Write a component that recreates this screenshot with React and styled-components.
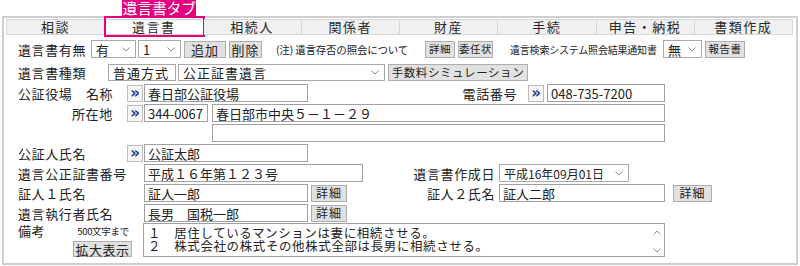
import React from 'react'
import styled, { createGlobalStyle } from 'styled-components'

const GlobalStyle = createGlobalStyle`
  html, body {
    margin: 0;
    padding: 0;
    background: #fff;
  }
  body {
    font-family: "Noto Sans CJK JP", "Noto Sans", sans-serif;
    color: #222;
  }
`

const Page = styled.div`
  width: 800px;
  height: 266px;
  padding: 16px 0 0 2px;
  box-sizing: border-box;
  overflow: hidden;
`

const Frame = styled.div`
  width: 796px;
  height: 249px;
  box-sizing: border-box;
  border: 2px solid #cfcfcf;
  padding-top: 1px;
`

const TabBar = styled.div`
  display: flex;
  height: 16px;
  margin: 0 3px 0 2px;
`

const Tab = styled.div`
  position: relative;
  flex: 1;
  box-sizing: border-box;
  border: 1px solid #d6d6d6;
  border-left: ${p => (p.$first ? '1px solid #d6d6d6' : 'none')};
  background: ${p => (p.$active ? '#fff' : '#f0f0f0')};
  font-size: 13px;
  line-height: 14px;
  letter-spacing: 1.5px;
  text-align: center;
  color: #2a2a2a;
`

const TabMark = styled.div`
  position: absolute;
  left: -1px;
  top: -4px;
  right: -2px;
  bottom: -3px;
  border: 2.5px solid #e4007f;
  pointer-events: none;
`

const TabCaption = styled.div`
  position: absolute;
  left: 17px;
  top: -20px;
  width: 74px;
  height: 16px;
  background: #e4007f;
  color: #fff;
  font-size: 15px;
  line-height: 15px;
  letter-spacing: -0.3px;
  text-align: center;
  white-space: nowrap;
`

const Form = styled.div`
  padding-left: 14px;
`

const Row = styled.div`
  display: flex;
  align-items: center;
  height: ${p => p.$h || 20}px;
  margin-top: ${p => p.$mt || 0}px;
`

const Label = styled.span`
  flex: none;
  box-sizing: border-box;
  width: ${p => p.$w}px;
  padding-left: ${p => p.$indent || 0}px;
  padding-right: ${p => p.$pr || 0}px;
  font-size: 13px;
  letter-spacing: 0.6px;
  white-space: nowrap;
  text-align: ${p => (p.$right ? 'right' : 'left')};
`

const Note = styled.span`
  flex: none;
  width: ${p => p.$w}px;
  margin-left: ${p => p.$ml || 0}px;
  font-size: ${p => p.$fs}px;
  white-space: nowrap;
  letter-spacing: -0.2px;
`

const Button = styled.button`
  flex: none;
  box-sizing: border-box;
  width: ${p => p.$w}px;
  height: ${p => p.$h || 17}px;
  margin-left: ${p => p.$ml || 0}px;
  padding: 0;
  background: #e1e1e1;
  border: 1px solid #adadad;
  border-radius: 0;
  font-family: inherit;
  font-size: ${p => p.$fs || 12}px;
  letter-spacing: ${p => (p.$ls === undefined ? 1 : p.$ls)}px;
  line-height: 1;
  color: #222;
  white-space: nowrap;
`

const WideButton = styled(Button)`
  margin-left: 55px;
`

const Jump = styled.button`
  flex: none;
  box-sizing: border-box;
  width: 16px;
  height: 17px;
  margin-right: 1px;
  padding: 0 0 2px;
  background: #f6f6f6;
  border: 1px solid #bcbcbc;
  border-radius: 0;
  color: #1b3a94;
  font-family: "DejaVu Sans", sans-serif;
  font-weight: bold;
  font-size: 15px;
  line-height: 1;
`

const Gap = styled.span`
  flex: none;
  width: ${p => p.$w}px;
`

const Field = styled.input`
  flex: none;
  box-sizing: border-box;
  width: ${p => p.$w}px;
  height: 18px;
  margin: 0 0 0 ${p => p.$ml || 0}px;
  padding: 0 3px;
  border: 1px solid #a0a0a0;
  border-radius: 0;
  background: #fff;
  font-family: inherit;
  font-size: 13px;
  color: #222;
  outline: none;
`

const SelectBox = styled.div`
  flex: none;
  display: flex;
  align-items: center;
  justify-content: space-between;
  box-sizing: border-box;
  width: ${p => p.$w}px;
  height: ${p => p.$h || 18}px;
  margin-left: ${p => p.$ml || 0}px;
  padding: 0 5px 0 4px;
  border: 1px solid #a8a8a8;
  background: #fff;
  font-size: ${p => p.$fs || 13}px;
  letter-spacing: ${p => p.$ls || 0}px;
  white-space: nowrap;
`

const Chevron = ({ up }) => (
  <svg width="8" height="5" viewBox="0 0 8 5">
    <polyline
      points={up ? '0.5,4.5 4,1 7.5,4.5' : '0.5,0.5 4,4 7.5,0.5'}
      fill="none"
      stroke="#8a8a8a"
      strokeWidth="1"
    />
  </svg>
)

const Select = ({ w, ml, ls, h, fs, children }) => (
  <SelectBox $w={w} $ml={ml} $ls={ls} $h={h} $fs={fs}>
    <span>{children}</span>
    <Chevron />
  </SelectBox>
)

const MemoSide = styled.div`
  flex: none;
  display: flex;
  flex-direction: column;
  justify-content: space-between;
  width: 125px;
  height: 34px;
`

const MemoHead = styled.div`
  display: flex;
  align-items: flex-end;
  height: 13px;
  margin-top: 1px;
  font-size: 13px;
  line-height: 13px;
  letter-spacing: 0.6px;
`

const Small = styled.span`
  margin-left: 32px;
  font-size: 9.5px;
  line-height: 11px;
  letter-spacing: -0.3px;
`

const Memo = styled.div`
  flex: none;
  display: flex;
  box-sizing: border-box;
  width: 522px;
  height: 34px;
  border: 1px solid #a0a0a0;
  background: #fff;
`

const MemoText = styled.div`
  flex: 1;
  padding: 3px 0 0 4px;
  font-size: 12.5px;
  line-height: 12.5px;
  letter-spacing: 0.6px;
  white-space: pre;
`

const Scroll = styled.div`
  flex: none;
  display: flex;
  flex-direction: column;
  justify-content: space-between;
  align-items: center;
  width: 14px;
  padding: 6px 0 3px;
  box-sizing: border-box;
`

export default function App() {
  const tabs = ['相談', '遺言書', '相続人', '関係者', '財産', '手続', '申告・納税', '書類作成']
  return (
    <Page>
      <GlobalStyle />
      <Frame>
        <TabBar>
          {tabs.map((t, i) => (
            <Tab key={t} $first={i === 0} $active={i === 1}>
              {t}
              {i === 1 && (
                <>
                  <TabMark />
                  <TabCaption>遺言書タブ</TabCaption>
                </>
              )}
            </Tab>
          ))}
        </TabBar>

        <Form>
          <Row $h={18} $mt={5}>
            <Label $w={73}>遺言書有無</Label>
            <Select w={45}>有</Select>
            <Select w={43} ml={2}>1</Select>
            <Button $w={42} $ml={3} $fs={13}>追加</Button>
            <Button $w={33} $ml={3} $fs={13}>削除</Button>
            <Note $w={149} $ml={14} $fs={10.5}>(注) 遺言存否の照会について</Note>
            <Button $w={30} $fs={10.5} $ls={0.5}>詳細</Button>
            <Button $w={35} $ml={3} $fs={10.5} $ls={0.5}>委任状</Button>
            <Note $w={153} $ml={17} $fs={10}>遺言検索システム照会結果通知書</Note>
            <Select w={39}>無</Select>
            <Button $w={40} $ml={3} $fs={10.5} $ls={0.5}>報告書</Button>
          </Row>

          <Row $h={17} $mt={6}>
            <Label $w={90}>遺言書種類</Label>
            <Select w={68} h={17} ls={1}>普通方式</Select>
            <Select w={207} h={17} ml={2} ls={1}>公正証書遺言</Select>
            <Button $w={140} $ml={3} $fs={11.5} $ls={0.6}>手数料シミュレーション</Button>
          </Row>

          <Row $mt={2}>
            <Label $w={109}>公証役場　名称</Label>
            <Jump>»</Jump>
            <Field $w={164} readOnly value="春日部公証役場" />
            <Label $w={220} $right $pr={11}>電話番号</Label>
            <Jump>»</Jump>
            <Field $w={118} $ml={2} readOnly value="048-735-7200" />
          </Row>

          <Row>
            <Label $w={109} $indent={54}>所在地</Label>
            <Jump>»</Jump>
            <Field $w={64} readOnly value="344-0067" />
            <Field $w={453} $ml={4} readOnly value="春日部市中央５－１－２９" />
          </Row>

          <Row>
            <Gap $w={194} />
            <Field $w={453} readOnly value="" />
          </Row>

          <Row>
            <Label $w={109}>公証人氏名</Label>
            <Jump>»</Jump>
            <Field $w={164} readOnly value="公証太郎" />
          </Row>

          <Row>
            <Label $w={126}>遺言公正証書番号</Label>
            <Field $w={219} readOnly value="平成１６年第１２３号" />
            <Label $w={136} $right $pr={4}>遺言書作成日</Label>
            <Select w={130} fs={12}>平成16年09月01日</Select>
          </Row>

          <Row>
            <Label $w={126}>証人１氏名</Label>
            <Field $w={164} readOnly value="証人一郎" />
            <Button $w={36} $ml={3} $fs={12}>詳細</Button>
            <Label $w={152} $right $pr={4}>証人２氏名</Label>
            <Field $w={166} readOnly value="証人二郎" />
            <Button $w={39} $ml={8} $fs={12}>詳細</Button>
          </Row>

          <Row>
            <Label $w={126}>遺言執行者氏名</Label>
            <Field $w={164} readOnly value="長男　国税一郎" />
            <Button $w={36} $ml={3} $fs={12}>詳細</Button>
          </Row>

          <Row $h={34}>
            <MemoSide>
              <MemoHead>
                <span>備考</span>
                <Small>500文字まで</Small>
              </MemoHead>
              <WideButton $w={59} $h={16} $fs={13} $ls={0.5}>拡大表示</WideButton>
            </MemoSide>
            <Memo>
              <MemoText>
                {'１　居住しているマンションは妻に相続させる。\n２　株式会社の株式その他株式全部は長男に相続させる。'}
              </MemoText>
              <Scroll>
                <Chevron up />
                <Chevron />
              </Scroll>
            </Memo>
          </Row>
        </Form>
      </Frame>
    </Page>
  )
}
